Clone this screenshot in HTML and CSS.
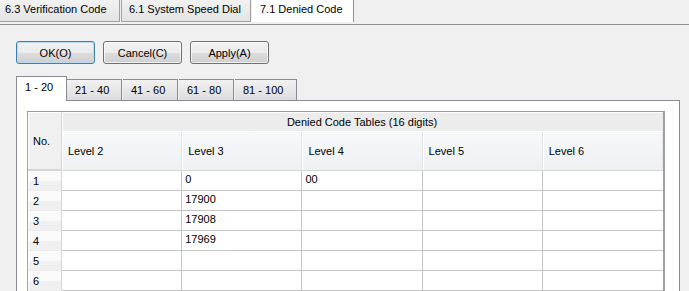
FILE: index.html
```html
<!DOCTYPE html>
<html lang="en">
<head>
<meta charset="UTF-8">
<title>7.1 Denied Code</title>
<link rel="stylesheet" href="styles.css">
</head>
<body>

<div class="tabbar">
    <div class="tab t1">6.3 Verification Code</div>
    <div class="tab t2">6.1 System Speed Dial</div>
    <div class="tab t3 active">7.1 Denied Code</div>
</div>

<div class="buttons">
    <button class="btn default">OK(O)</button>
    <button class="btn">Cancel(C)</button>
    <button class="btn">Apply(A)</button>
</div>

<div class="subtabs">
    <div class="subtab active">1 - 20</div>
    <div class="subtab">21 - 40</div>
    <div class="subtab">41 - 60</div>
    <div class="subtab">61 - 80</div>
    <div class="subtab wide">81 - 100</div>
</div>

<div class="panel">
    <table class="grid">
        <thead>
            <tr>
                <th class="no" rowspan="2">No.</th>
                <th class="group" colspan="5">Denied Code Tables (16 digits)</th>
            </tr>
            <tr class="levels">
                <th>Level 2</th>
                <th>Level 3</th>
                <th>Level 4</th>
                <th>Level 5</th>
                <th>Level 6</th>
            </tr>
        </thead>
        <tbody id="rows"></tbody>
    </table>
</div>

<script>
// rows of the table (only the visible ones)
const data = {
    1: ["", "0", "00", "", ""],
    2: ["", "17900", "", "", ""],
    3: ["", "17908", "", "", ""],
    4: ["", "17969", "", "", ""]
};
const rows = document.getElementById("rows");
for (let i = 1; i <= 6; i++) {
    const tr = document.createElement("tr");
    const cells = data[i] || ["", "", "", "", ""];
    tr.innerHTML = '<td class="num">' + i + '</td>' +
        cells.map(c => "<td>" + c + "</td>").join("");
    rows.appendChild(tr);
}
</script>

</body>
</html>
```

FILE: styles.css
```css
body {
    margin: 0;
    height: 291px;
    overflow: hidden;
    background: #f0f0f0;
    color: #000;
    font-family: "Liberation Sans", Arial, sans-serif;
    font-size: 11px;
}

/* top tabs */
.tabbar {
    display: flex;
    gap: 1px;
    height: 24px;
    border-bottom: 1px solid #8c8e94;
    align-items: flex-start;
}

.tab {
    box-sizing: border-box;
    height: 22px;
    line-height: 18px;
    white-space: nowrap;
    background: linear-gradient(#f2f2f2, #e3e3e3);
    border-right: 1px solid #a0a0a0;
    border-bottom: 1px solid #a0a0a0;
}

.tab.t1 { width: 120px; padding-left: 5px; }

.tab.t2 {
    width: 130px;
    padding-left: 7px;
    border-left: 1px solid #a0a0a0;
}

.tab.active {
    width: 102px;
    padding-left: 8px;
    background: #fff;
    border-bottom: none;
    border-right: 1px solid #8c8e94;
}

/* buttons */
.buttons {
    display: flex;
    gap: 8px;
    padding: 16px 0 0 16px;
}

.btn {
    width: 79px;
    height: 23px;
    font: inherit;
    color: #000;
    border: 1px solid #707070;
    border-radius: 3px;
    background: linear-gradient(#f2f2f2 0%, #ebebeb 50%, #dddddd 51%, #cfcfcf 100%);
    box-shadow: inset 0 0 0 1px rgba(255,255,255,0.7);
    padding: 0;
}

.btn.default {
    border-color: #3c7fb1;
    box-shadow: inset 0 0 0 1px #b9dcf4;
}

/* inner tabs */
.subtabs {
    display: flex;
    align-items: flex-end;
    gap: 1px;
    margin: 12px 0 0 16px;
    height: 24px;
}

.subtab {
    width: 55px;
    height: 21px;
    line-height: 20px;
    box-sizing: border-box;
    padding-left: 8px;
    border: 1px solid #898c95;
    border-bottom: none;
    border-left: none;
    background: linear-gradient(#f2f2f2, #dcdcdc);
}

.subtab.wide { width: 62px; }

.subtab.active {
    width: 51px;
    height: 25px;
    line-height: 20px;
    padding-left: 8px;
    border-left: 1px solid #898c95;
    background: #fff;
    position: relative;
    top: 1px;
    margin-right: -1px;
}

.panel {
    margin-left: 16px;
    width: 664px;
    box-sizing: border-box;
    border: 1px solid #898c95;
    background: #fff;
    padding: 10px 0 0 10px;
    height: 200px;
}

/* table */
.grid {
    border-collapse: separate;
    border-spacing: 0;
    border-top: 1px solid #9a9a9a;
    border-left: 1px solid #a0a0a0;
    border-right: 2px solid #a0a0a0;
    table-layout: fixed;
    width: 638px;
}

.grid th {
    font-weight: normal;
    text-align: left;
    padding: 0 0 0 6px;
}

.grid .no {
    width: 28px;
    padding-left: 5px;
    background: #f0f0f0;
    border-right: 1px solid #d6d6d6;
    border-bottom: 2px solid #d5d5d5;
    box-shadow: inset 1px 1px 0 #fff;
}

.grid .group {
    height: 18px;
    text-align: center;
    padding: 0;
    background: #ececec;
    border-top: 1px solid #fff;
    border-right: 1px solid #e8e8e8;
    border-bottom: 1px solid #ffffff;
    box-shadow: inset 1px 0 0 #fff;
}

.levels th {
    height: 38px;
    background: linear-gradient(#f7f8fa, #eef0f3);
    border-right: 1px solid #e2e4e7;
    border-bottom: 1px solid #d5d5d5;
    box-shadow: inset 1px 0 0 #fff;
}

.grid td {
    height: 19px;
    padding: 0 0 0 3px;
    vertical-align: top;
    line-height: 17px;
    border-right: 1px solid #c4c4c4;
    border-bottom: 1px solid #c4c4c4;
}

.grid td:last-child { border-right: none; }

.grid td.num {
    height: 17px;
    padding: 2px 0 0 5px;
    line-height: 17px;
    background: linear-gradient(#fafafa 0%, #fafafa 50%, #f0f0f0 51%, #f0f0f0 100%);
    border-right: 1px solid #d6d6d6;
    border-bottom: 1px solid #ececec;
    box-shadow: inset 1px 0 0 #fff;
}
```
